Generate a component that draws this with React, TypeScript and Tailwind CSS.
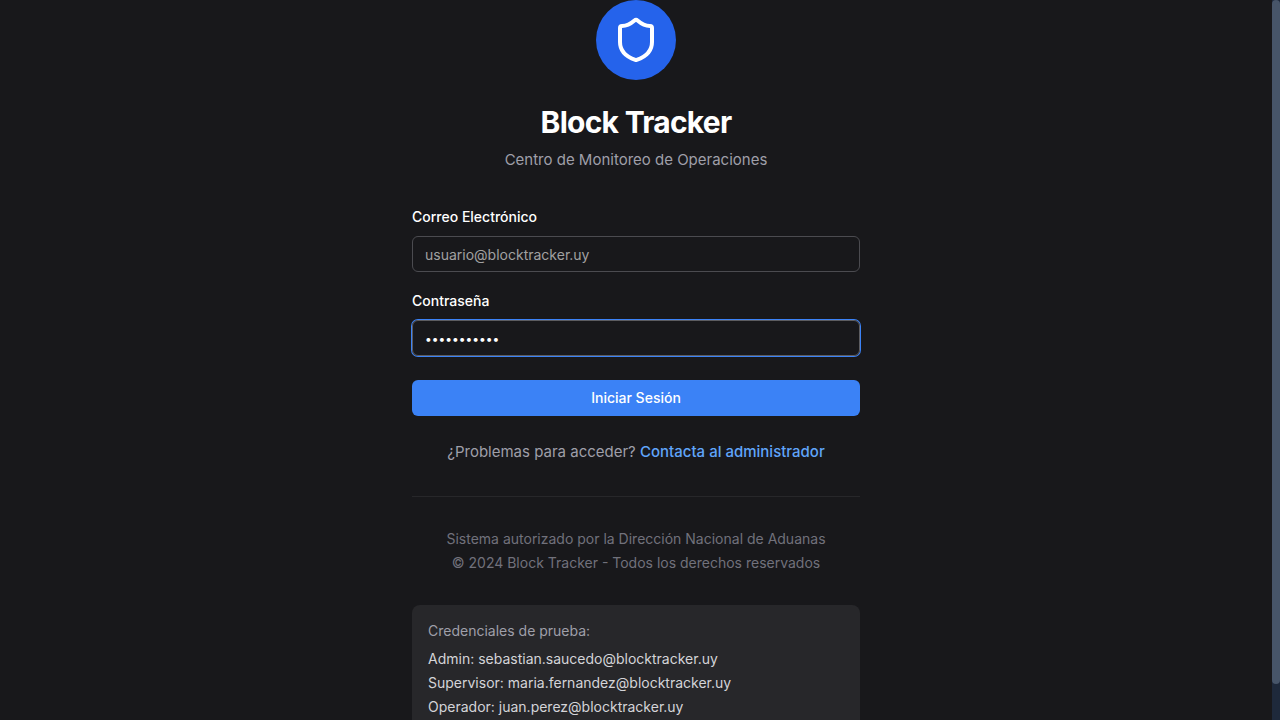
import { useState } from "react";
import { Shield } from "lucide-react";

const accounts = [
  { role: "Admin", email: "sebastian.saucedo@blocktracker.uy" },
  { role: "Supervisor", email: "maria.fernandez@blocktracker.uy" },
  { role: "Operador", email: "juan.perez@blocktracker.uy" },
];

export default function App() {
  const [email, setEmail] = useState("");
  const [password, setPassword] = useState("blocktrack1");

  return (
    <div className="flex h-screen bg-[#18181b] font-['Inter','Liberation_Sans',sans-serif] text-white">
      <div className="min-w-0 flex-1 overflow-y-auto [scrollbar-width:none]">
        <main className="mx-auto w-full max-w-md pb-6">
          <header className="flex flex-col items-center text-center">
            <div className="flex size-20 items-center justify-center rounded-full bg-[#2563eb]">
              <Shield className="size-12" strokeWidth={2} aria-hidden="true" />
            </div>
            <h1 className="mt-6 text-3xl leading-9 font-bold tracking-tight">Block Tracker</h1>
            <p className="mt-2 text-[15px] leading-6 text-[#9f9fa9]">Centro de Monitoreo de Operaciones</p>
          </header>

          <form className="mt-8" onSubmit={(event) => event.preventDefault()}>
            <div className="flex flex-col gap-1.5">
              <label htmlFor="email" className="text-sm leading-[26px] font-medium">
                Correo Electrónico
              </label>
              <input
                id="email"
                type="email"
                value={email}
                onChange={(event) => setEmail(event.target.value)}
                placeholder="usuario@blocktracker.uy"
                className="h-9 w-full rounded-md border border-[#4b4b50] px-3 text-sm outline-none placeholder:text-[#a1a1a1]"
              />
            </div>
            <div className="mt-4 flex flex-col gap-1.5">
              <label htmlFor="password" className="text-sm leading-[26px] font-medium">
                Contraseña
              </label>
              <input
                id="password"
                type="password"
                value={password}
                onChange={(event) => setPassword(event.target.value)}
                className="h-9 w-full rounded-md border border-[#5c5c60] px-3 text-xs ring-1 ring-[#3b82f6] outline-none"
              />
            </div>
            <button type="submit" className="mt-6 h-9 w-full rounded-md bg-[#3b82f6] text-sm font-medium">
              Iniciar Sesión
            </button>
          </form>

          <p className="mt-6 text-center text-[15px] leading-6 text-[#9f9fa9]">
            ¿Problemas para acceder?{" "}
            <a href="#contacto" className="font-medium text-[#60a5fa]">
              Contacta al administrador
            </a>
          </p>

          <footer className="mt-8 flex flex-col gap-1 border-t border-[#27272a] pt-8 text-center text-sm text-[#71717b]">
            <p>Sistema autorizado por la Dirección Nacional de Aduanas</p>
            <p>© 2024 Block Tracker - Todos los derechos reservados</p>
          </footer>

          <section className="mt-8 rounded-lg bg-[#27272a] p-4 text-sm">
            <h2 className="text-[#9f9fa9]">Credenciales de prueba:</h2>
            <ul className="mt-2 flex flex-col gap-1 text-[#d4d4d8]">
              {accounts.map((account) => (
                <li key={account.role}>
                  {account.role}: {account.email}
                </li>
              ))}
            </ul>
          </section>
        </main>
      </div>
      <div className="w-2 shrink-0 bg-[#1e293b]" aria-hidden="true">
        <div className="h-[95%] rounded bg-[#475569]" />
      </div>
    </div>
  );
}
